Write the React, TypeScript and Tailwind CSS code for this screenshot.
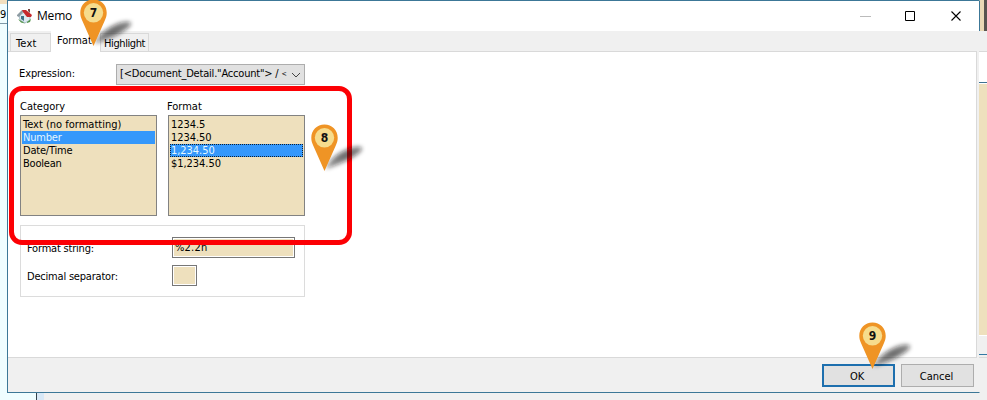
import type { ReactNode } from 'react';

function Pin({ n, className }: { n: number; className: string }) {
  return (
    <svg className={'absolute z-20 overflow-visible ' + className} width="68" height="54" viewBox="0 0 68 54">
      <defs>
        <filter id={'soft' + n} x="-30%" y="-40%" width="160%" height="180%">
          <feGaussianBlur stdDeviation="1.9" />
        </filter>
        <linearGradient id={'fade' + n} x1="0" y1="1" x2="1" y2="0">
          <stop offset="0" stopColor="#171313" stopOpacity=".4" />
          <stop offset=".55" stopColor="#171313" stopOpacity=".62" />
          <stop offset="1" stopColor="#171313" stopOpacity=".5" />
        </linearGradient>
      </defs>
      <path d="M15 45 Q18 35 29 29 Q43 21 50 23 Q54 26 42 33 Q32 39 15 45Z" fill={`url(#fade${n})`} filter={`url(#soft${n})`} />
      <path d="M13.5 47 L2.2 21.5 C.8 18.5 .3 16.5 .3 13.8 C.3 6 6 .5 13.5 .5 S26.7 6 26.7 13.8 C26.7 16.5 26.2 18.5 24.8 21.5Z" fill="#ef9425" />
      <circle cx="13.5" cy="13.8" r="9.7" fill="#f6dc8d" />
      <text x="13.5" y="18" textAnchor="middle" fontSize="12" fontWeight="900" fontFamily="'DejaVu Sans', sans-serif" letterSpacing="0" fill="#111">{n}</text>
    </svg>
  );
}

function Item({ children, selected, focus }: { children: ReactNode; selected?: boolean; focus?: boolean }) {
  return (
    <div className={'h-[13px] whitespace-nowrap pl-px leading-[13px] ' + (selected ? 'bg-[#3598fb] text-[#e4f7ff] ' : '') + (focus ? 'outline-1 -outline-offset-1 outline-dotted outline-[#102030]' : '')}>
      {children}
    </div>
  );
}

function House() {
  return (
    <svg width="16" height="15" viewBox="0 0 16 15">
      <path d="M2 7 7 3l6 4v4l-5 3-5-3z" fill="#dceaf0" stroke="#7b99a8" strokeWidth=".6" />
      <path d="M0 6 5 1l2 1-5 6-2-1z" fill="#8d9ba3" />
      <path d="M5 1 9 1 15 6 14 8 10 8 6 3z" fill="#c6282c" />
      <path d="M11 0h2v4l-2-2z" fill="#774843" />
      <path d="M4 7h3v5l-3-2z" fill="#3e7186" />
      <path d="M1 10l5 3 2 1.500-4-1zM10 13l4-3-1 3-3 1z" fill="#519348" />
    </svg>
  );
}

export default function App() {
  return (
    <div className="relative h-[400px] w-[987px] overflow-hidden bg-[#f0f0f0] font-['DejaVu_Sans_Condensed','DejaVu_Sans',sans-serif] text-[11px] tracking-[-0.2px] text-black [font-stretch:condensed]">
      <div className="absolute left-0 top-0 h-[400px] w-[36px] bg-[#effdff]">
        <div className="h-1 w-[7px] bg-[#f1dfbf]" />
        <div className="h-5 w-[7px] border-b border-[#7f98a6] pt-[3px] leading-[15px]">9</div>
      </div>
      <div className="absolute left-[36px] top-[393px] h-[7px] w-[8px] border-l border-[#33434d] bg-[#d8e8f6]" />
      <div className="absolute left-[979px] top-0 flex h-[400px] w-2 flex-col">
        <div className="flex h-[31px]"><div className="w-[5px] bg-[#ead9b5]" /><div className="w-[3px] bg-[#57544f]" /></div>
        <div className="h-[21px] border-b border-[#d9d9d9] bg-[#f0f0f0]" />
        <div className="h-[31px] border-b border-[#3e7291] bg-white" />
        <div className="h-px bg-white" />
        <div className="h-[252px] border-b border-white bg-[#eee0bd]" />
        <div className="h-[19px] border-b border-[#3379a4] bg-[#f0f0f0]" />
        <div className="h-[3px] border-b border-[#d9d9d9]" />
      </div>

      <div className="absolute left-[7px] top-0 flex h-[393px] w-[973px] flex-col border border-[#3c7797] border-r-transparent bg-[#f0f0f0] bg-clip-padding">
        <div className="-mr-px flex h-[30px] shrink-0 items-center border-r border-[#3c7797] bg-white pl-[9px]">
          <House />
          <span className="ml-[4px] font-['Open_Sans',sans-serif] text-[12px] tracking-[-0.2px] [font-stretch:normal]">Memo</span>
          <svg className="ml-auto mr-[5px]" width="114" height="12" viewBox="0 0 114 12" fill="none" stroke="#000">
            <path d="M0 6.5h11" stroke="#bbb" />
            <path d="M45.500 1.500h9v9h-9z" />
            <path d="m91.500 1.500 9 9m0-9-9 9" strokeWidth="1.1" />
          </svg>
        </div>
        <div className="flex h-5 shrink-0 items-end">
          <div className="ml-[2px] h-[18px] w-[41px] border border-b-0 border-[#d9d9d9] pl-[5px] leading-[19px] tracking-[0.2px]">Text</div>
          <div className="z-10 -mb-px h-[21px] w-[49px] bg-white pl-[6px] leading-[20px] tracking-[0px]">Format</div>
          <div className="h-[18px] w-[49px] border border-b-0 border-[#d9d9d9] pl-[3px] leading-[19px] tracking-[-0.4px]">Highlight</div>
        </div>
        <div className="h-[307px] w-[969px] shrink-0 border border-l-0 border-[#d9d9d9] bg-white pl-3">
          <div className="flex h-[33px] items-end">
            <span className="-ml-px mb-[4px] w-[97px] leading-[14px] tracking-[-0.1px]">Expression:</span>
            <div className="flex h-[21px] w-[189px] items-center border border-[#adadad] bg-[#e1e1e1] pl-[3px]">
              <span className="w-[168px] whitespace-nowrap tracking-[-0.2px]">[&lt;Document_Detail."Account"&gt; / <span className="inline-block align-[1px] text-[7px] leading-none">&lt;</span></span>
              <svg className="ml-[3px]" width="10" height="6" viewBox="0 0 10 6" fill="none" stroke="#444"><path d="m1 1 4 4 4-4" /></svg>
            </div>
          </div>
          <div className="mt-[14px] flex gap-[11px]">
            <div className="w-[137px]">
              <div className="h-[16px] leading-[16px] tracking-[0px]">Category</div>
              <div className="h-[101px] border border-[#828282] bg-[#eee0bd] px-px pt-[2px]">
                <Item><span className="tracking-[0px]">Text (no formatting)</span></Item><Item selected>Number</Item><Item>Date/Time</Item><Item>Boolean</Item>
              </div>
            </div>
            <div className="w-[137px]">
              <div className="-ml-px h-[16px] leading-[16px] tracking-[0px]">Format</div>
              <div className="h-[101px] border border-[#828282] bg-[#eee0bd] px-px pt-[2px] tracking-[-0.05px]">
                <Item>1234.5</Item><Item>1234.50</Item><Item selected focus>1,234.50</Item><Item>$1,234.50</Item>
              </div>
            </div>
          </div>
          <div className="mt-[9px] h-[72px] w-[285px] border border-[#dcdcdc] pl-[6px] pt-[11px]">
            <div className="flex items-center">
              <span className="w-[145px] pt-[3px]">Format string:</span>
              <div className="h-[21px] w-[123px] border border-[#777] bg-[#eee0bd] pl-[2px] leading-[19px] tracking-[0.2px] shadow-[inset_0_0_0_1px_white]">%2.2n</div>
            </div>
            <div className="mt-[7px] flex items-center">
              <span className="w-[145px] pt-[3px]">Decimal separator:</span>
              <div className="h-[21px] w-[25px] border border-[#777] bg-[#eee0bd] shadow-[inset_0_0_0_1px_white]" />
            </div>
          </div>
        </div>
        <div className="flex gap-[6px] pl-[814px] pt-[6px]">
          <button className="h-[23px] w-[73px] border-2 border-[#1d6fae] bg-[#e1e1e1] pr-[3px] pt-[2px] leading-[17px]">OK</button>
          <button className="h-[23px] w-[73px] border border-[#adadad] bg-[#e1e1e1] pr-[2px] pt-[2px] leading-[19px] tracking-[0px]">Cancel</button>
        </div>
      </div>
      <div className="absolute left-[9px] top-[86px] h-[159px] w-[343px] rounded-[13px] border-[5px] border-[#fc0004]" />
      <Pin n={7} className="left-[80px] top-[-1px]" />
      <Pin n={8} className="left-[311px] top-[124px]" />
      <Pin n={9} className="left-[859px] top-[322px]" />
    </div>
  );
}
